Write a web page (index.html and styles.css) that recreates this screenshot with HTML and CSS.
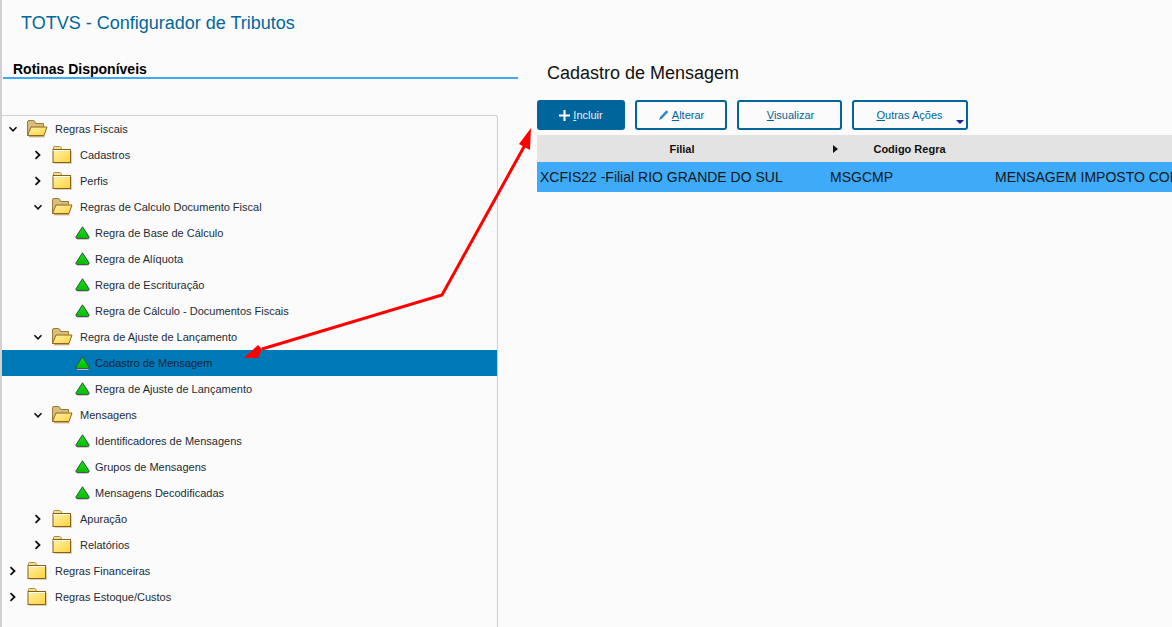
FILE: index.html
```html
<!DOCTYPE html>
<html lang="pt-BR">
<head>
<meta charset="utf-8">
<title>TOTVS - Configurador de Tributos</title>
<link rel="stylesheet" href="styles.css">
</head>
<body>
<svg class="defs" width="0" height="0" aria-hidden="true">
  <defs>
    <linearGradient id="fy" x1="0" y1="0" x2="1" y2="1"><stop offset="0" stop-color="#fff3a8"/><stop offset="1" stop-color="#fdd23c"/></linearGradient>
    <linearGradient id="gr" x1="0" y1="0" x2="0" y2="1"><stop offset="0" stop-color="#20e020"/><stop offset="1" stop-color="#00bc00"/></linearGradient>
    <symbol id="closed" viewBox="0 0 20 18">
      <path d="M2 18.000V5h17.500v13z" fill="#c9b48c" opacity=".6" transform="translate(.5 0)"/>
      <path d="M1.500 3.500V1.500q0-1 1-1h5q1 0 1.500 1l.7 2z" fill="#f3df8f" stroke="#a88a4c"/>
      <rect x="1" y="3.500" width="17.500" height="13" fill="url(#fy)" stroke="#8a5f1a"/>
      <path d="M1.500 4.500h16.500" stroke="#fff" stroke-width="1"/>
    </symbol>
    <symbol id="open" viewBox="0 0 22 18">
      <path d="M1.500 15.500V2q0-1.500 1.500-1.500h4.500q1 0 1.500 1.500l.5 1.500h8v3" fill="#d9bd7c" stroke="#9a7733"/>
      <path d="M1.500 15.500 5 7h16l-3 8.500z" fill="url(#fy)" stroke="#8f6520"/>
      <path d="M3 16.700h15.500" stroke="#b9a06c" stroke-width="1.200"/>
    </symbol>
    <symbol id="leaf" viewBox="0 0 15 14">
      <path d="M7.500 .8 14 10.800q.5 1.700-1.300 1.700H2.300q-1.800 0-1.300-1.700z" fill="url(#gr)" stroke="#3a4a40" stroke-width="1" stroke-linejoin="round"/>
      <path d="M2 13.400h11.500" stroke="#c4c4c4"/>
    </symbol>
    <symbol id="right" viewBox="0 0 8 10"><path d="M1.500 1.200 5.500 5l-4 3.800" fill="none" stroke="#101010" stroke-width="1.800"/></symbol>
    <symbol id="down" viewBox="0 0 10 8"><path d="M1.500 1.800 5 5.300l3.500-3.500" fill="none" stroke="#101010" stroke-width="1.600"/></symbol>
  </defs>
</svg>

<div class="page">
  <header class="app-title">TOTVS - Configurador de Tributos</header>
  <div class="columns">
    <aside class="side">
      <h2 class="side-title">Rotinas Disponíveis</h2>
      <div class="tree">
        <div class="node l0"><svg class="tog"><use href="#down"/></svg><svg class="folder open"><use href="#open"/></svg><span>Regras Fiscais</span></div>
        <div class="node l1"><svg class="tog r"><use href="#right"/></svg><svg class="folder"><use href="#closed"/></svg><span>Cadastros</span></div>
        <div class="node l1"><svg class="tog r"><use href="#right"/></svg><svg class="folder"><use href="#closed"/></svg><span>Perfis</span></div>
        <div class="node l1"><svg class="tog"><use href="#down"/></svg><svg class="folder open"><use href="#open"/></svg><span>Regras de Calculo Documento Fiscal</span></div>
        <div class="node l2"><svg class="dot"><use href="#leaf"/></svg><span>Regra de Base de Cálculo</span></div>
        <div class="node l2"><svg class="dot"><use href="#leaf"/></svg><span>Regra de Alíquota</span></div>
        <div class="node l2"><svg class="dot"><use href="#leaf"/></svg><span>Regra de Escrituração</span></div>
        <div class="node l2"><svg class="dot"><use href="#leaf"/></svg><span>Regra de Cálculo - Documentos Fiscais</span></div>
        <div class="node l1"><svg class="tog"><use href="#down"/></svg><svg class="folder open"><use href="#open"/></svg><span>Regra de Ajuste de Lançamento</span></div>
        <div class="node l2 sel"><svg class="dot"><use href="#leaf"/></svg><span>Cadastro de Mensagem</span></div>
        <div class="node l2"><svg class="dot"><use href="#leaf"/></svg><span>Regra de Ajuste de Lançamento</span></div>
        <div class="node l1"><svg class="tog"><use href="#down"/></svg><svg class="folder open"><use href="#open"/></svg><span>Mensagens</span></div>
        <div class="node l2"><svg class="dot"><use href="#leaf"/></svg><span>Identificadores de Mensagens</span></div>
        <div class="node l2"><svg class="dot"><use href="#leaf"/></svg><span>Grupos de Mensagens</span></div>
        <div class="node l2"><svg class="dot"><use href="#leaf"/></svg><span>Mensagens Decodificadas</span></div>
        <div class="node l1"><svg class="tog r"><use href="#right"/></svg><svg class="folder"><use href="#closed"/></svg><span>Apuração</span></div>
        <div class="node l1"><svg class="tog r"><use href="#right"/></svg><svg class="folder"><use href="#closed"/></svg><span>Relatórios</span></div>
        <div class="node l0"><svg class="tog r"><use href="#right"/></svg><svg class="folder"><use href="#closed"/></svg><span>Regras Financeiras</span></div>
        <div class="node l0"><svg class="tog r"><use href="#right"/></svg><svg class="folder"><use href="#closed"/></svg><span>Regras Estoque/Custos</span></div>
      </div>
    </aside>
    <main class="content">
      <h1 class="content-title">Cadastro de Mensagem</h1>
      <div class="toolbar">
        <button class="btn primary w-incluir"><svg class="ico-plus" viewBox="0 0 11 11"><path d="M5.500 0v11M0 5.500h11" stroke="#fff" stroke-width="2"/></svg><span><u>I</u>ncluir</span></button>
        <button class="btn w-alterar"><svg class="ico-pen" viewBox="0 0 11 12"><path d="M1 11 2 8 8.500 1.200 10.300 3 3.800 9.800z" fill="#2f86c8"/></svg><span><u>A</u>lterar</span></button>
        <button class="btn w-visualizar"><span><u>V</u>isualizar</span></button>
        <button class="btn w-outras"><span><u>O</u>utras Ações</span><i class="caret"></i></button>
      </div>
      <div class="grid-head">
        <div class="col-a">Filial</div>
        <div class="col-b"><i class="sort"></i>Codigo Regra</div>
        <div class="col-c"></div>
      </div>
      <div class="grid-row">
        <div class="col-a">XCFIS22 -Filial RIO GRANDE DO SUL</div>
        <div class="col-b">MSGCMP</div>
        <div class="col-c">MENSAGEM IMPOSTO COMPLEMENTAR</div>
      </div>
    </main>
  </div>
</div>

<svg class="arrow" viewBox="0 0 1172 627" aria-hidden="true">
  <polyline points="262,349 442,295 525,145" fill="none" stroke="#f00" stroke-width="3" stroke-linejoin="miter"/>
  <path d="M244 358 258 345 262 349 258 358z" fill="#f00"/>
  <path d="M531 128 530 150 519 144z" fill="#f00"/>
</svg>
</body>
</html>
```
FILE: styles.css
```css
* { box-sizing: border-box; }
html, body { margin: 0; height: 627px; overflow: hidden; }
body { background: #fbfbfb; font-family: "Liberation Sans", Arial, sans-serif; color: #1d2b36; position: relative; }
.defs { position: absolute; }
.page { height: 627px; border-left: 2px solid #d0d0d0; }
.app-title { height: 47px; padding: 13px 0 0 19px; font-size: 18px; line-height: 21px; color: #00679c; }
.columns { display: flex; }
.side { width: 516px; flex: none; }
.side-title { margin: 0 0 0 1px; height: 32px; padding: 15px 0 0 10px; font-size: 14px; line-height: 15px; font-weight: 700; color: #000; border-bottom: 2px solid #3fa9f5; }
.tree { margin-top: 36px; width: 496px; height: 520px; border-top: 1px solid #cfcfcf; border-right: 1px solid #cfcfcf; border-top-right-radius: 3px; }
.node { display: flex; align-items: center; height: 26px; font-size: 11px; color: #1d2b36; }
.node svg { flex: none; }
.l0 { padding-left: 6px; }
.l1 { padding-left: 31px; }
.l2 { padding-left: 73px; }
.sel { background: #0079b8; color: #1a2630; }
.tog { width: 10px; height: 9px; margin-right: 9px; }
.tog.r { width: 8px; height: 10px; margin-left: 1px; margin-right: 10px; }
.folder { width: 20px; height: 18px; margin-right: 8px; }
.folder.open { width: 22px; margin-left: -1px; margin-right: 7px; }
.dot { width: 15px; height: 14px; margin-right: 5px; }
.content { flex: 1; min-width: 0; padding: 0 0 0 19px; }
.content-title { margin: 0; height: 53px; padding: 16px 0 0 10px; font-size: 18px; line-height: 21px; font-weight: 400; color: #111; white-space: nowrap; }
.toolbar { display: flex; gap: 10px; height: 35px; }
.btn { display: flex; align-items: center; justify-content: center; gap: 3px; height: 30px; padding: 0; background: #fbfbfb; border: 2px solid #00659b; border-radius: 3px; color: #00659b; font: 400 11px "Liberation Sans", Arial, sans-serif; position: relative; }
.primary { background: #00659b; color: #e8f1f6; }
.w-incluir { width: 88px; }
.w-alterar { width: 92px; }
.w-visualizar { width: 105px; padding-left: 2px; }
.w-outras { width: 116px; padding-right: 1px; }
.ico-plus { width: 11px; height: 11px; }
.ico-pen { width: 11px; height: 12px; }
.caret { position: absolute; right: 2px; bottom: 4px; border: 4px solid transparent; border-top: 4px solid #1b1fa8; border-bottom: 0; }
.grid-head, .grid-row { display: grid; grid-template-columns: 290px 165px 1fr; white-space: nowrap; overflow: hidden; }
.grid-head { height: 27px; background: #e3e3e3; font-size: 11px; font-weight: 700; color: #111; line-height: 29px; text-align: center; }
.grid-head .col-b { position: relative; }
.sort { position: absolute; left: 6px; top: 10px; border: 4px solid transparent; border-left: 5px solid #111; border-right: 0; }
.grid-row { height: 30px; background: #3fabf8; font-size: 14px; line-height: 30px; color: #101820; }
.grid-row .col-a { padding-left: 3px; }
.grid-row .col-b { padding-left: 3px; }
.grid-row .col-c { padding-left: 3px; }
.arrow { position: absolute; left: 0; top: 0; width: 1172px; height: 627px; pointer-events: none; }
```
